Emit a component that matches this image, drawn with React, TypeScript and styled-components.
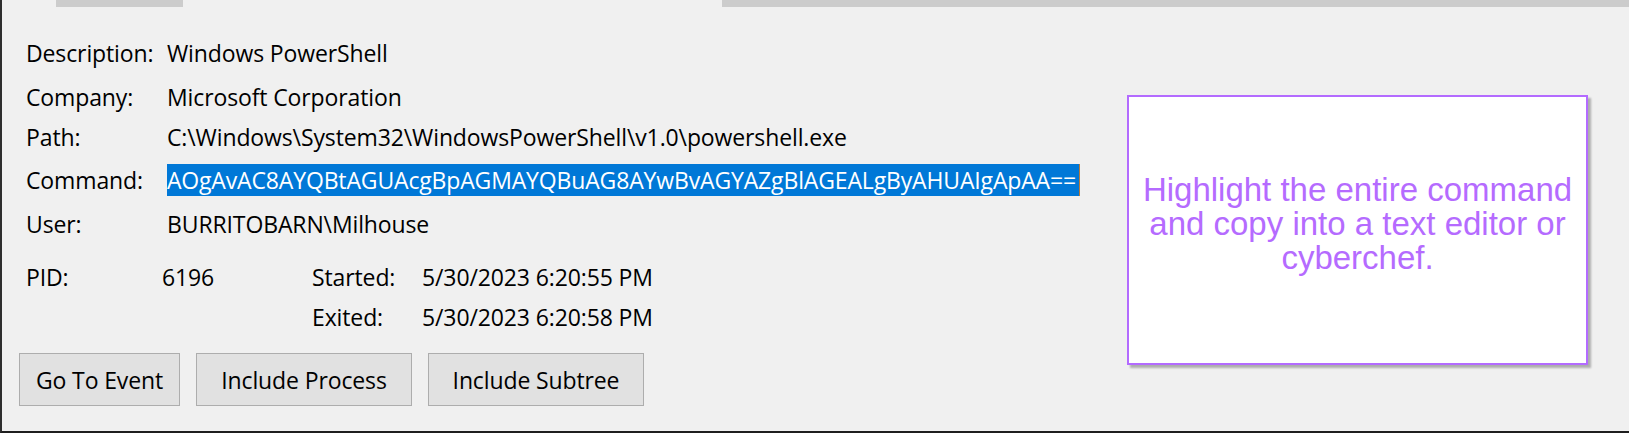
import React from 'react';
import styled, { createGlobalStyle } from 'styled-components';

const GlobalStyle = createGlobalStyle`
  html, body {
    margin: 0;
    padding: 0;
    background: #f0f0f0;
  }
  * {
    box-sizing: border-box;
  }
`;

const Window = styled.div`
  width: 1629px;
  height: 433px;
  background: #f0f0f0;
  border-left: 2px solid #2e2e2e;
  border-bottom: 2px solid #1e1e1e;
  font-family: 'Open Sans', 'Noto Sans', sans-serif;
  font-size: 23px;
  letter-spacing: -0.12px;
  color: #000;
  display: flex;
  flex-direction: column;
  overflow: hidden;
`;

const TabStrip = styled.div`
  display: flex;
  height: 7px;
  padding-left: 54px;
`;

const Tab = styled.div<{ $active?: boolean; $width?: number }>`
  height: 100%;
  width: ${(p) => (p.$width ? `${p.$width}px` : 'auto')};
  flex: ${(p) => (p.$width ? 'none' : '1')};
  background: ${(p) => (p.$active ? 'transparent' : '#cccccc')};
`;

const Body = styled.div`
  display: flex;
  flex: 1;
`;

const Details = styled.div`
  display: flex;
  flex-direction: column;
  padding: 24px 0 0 24px;
`;

const Row = styled.div<{ $h: number }>`
  display: flex;
  align-items: center;
  height: ${(p) => p.$h}px;
  line-height: ${(p) => p.$h}px;
  white-space: nowrap;
`;

const Label = styled.div<{ $w?: number }>`
  width: ${(p) => p.$w ?? 141}px;
  flex: none;
`;

const Value = styled.div<{ $w?: number }>`
  width: ${(p) => (p.$w ? `${p.$w}px` : 'auto')};
  flex: none;
`;

const CommandField = styled.div`
  width: 913px;
  height: 32px;
  line-height: 32px;
  background: #0078d7;
  color: #ffffff;
  display: flex;
  justify-content: flex-end;
  overflow: hidden;
  border-right: 1px solid #b87a3a;
  padding-right: 3px;
  letter-spacing: -0.15px;
`;

const Times = styled.div`
  display: flex;
  flex-direction: column;
  margin-top: 13px;
`;

const ButtonBar = styled.div`
  display: flex;
  gap: 16px;
  margin: 16px 0 0 -7px;
`;

const Button = styled.button<{ $w: number }>`
  width: ${(p) => p.$w}px;
  height: 53px;
  background: #e1e1e1;
  border: 1px solid #adadad;
  border-radius: 0;
  font-family: inherit;
  font-size: 23px;
  letter-spacing: inherit;
  color: #000;
  padding: 0;
`;

const Callout = styled.div`
  width: 461px;
  height: 270px;
  margin: 88px 41px 0 auto;
  background: #ffffff;
  border: 2px solid #b36bff;
  box-shadow: 3px 3px 2px rgba(0, 0, 0, 0.28);
  display: flex;
  align-items: center;
  justify-content: center;
  padding: 0 6px 12px;
  text-align: center;
  font-family: 'Liberation Sans', Arial, sans-serif;
  font-size: 33px;
  line-height: 34px;
  letter-spacing: 0;
  color: #b56bff;
`;

const command =
  'AOgAvAC8AYQBtAGUAcgBpAGMAYQBuAG8AYwBvAGYAZgBlAGEALgByAHUAIgApAA==';

export default function App() {
  return (
    <>
      <GlobalStyle />
      <Window>
        <TabStrip>
          <Tab $width={127} />
          <Tab $active $width={539} />
          <Tab />
        </TabStrip>
        <Body>
          <Details>
            <Row $h={44}>
              <Label>Description:</Label>
              <Value>Windows PowerShell</Value>
            </Row>
            <Row $h={44}>
              <Label>Company:</Label>
              <Value>Microsoft Corporation</Value>
            </Row>
            <Row $h={36}>
              <Label>Path:</Label>
              <Value>C:\Windows\System32\WindowsPowerShell\v1.0\powershell.exe</Value>
            </Row>
            <Row $h={50}>
              <Label>Command:</Label>
              <CommandField>{command}</CommandField>
            </Row>
            <Row $h={39}>
              <Label>User:</Label>
              <Value>BURRITOBARN\Milhouse</Value>
            </Row>
            <Times>
              <Row $h={40}>
                <Label $w={136}>PID:</Label>
                <Value $w={150}>6196</Value>
                <Label $w={110}>Started:</Label>
                <Value>5/30/2023 6:20:55 PM</Value>
              </Row>
              <Row $h={40}>
                <Label $w={286} />
                <Label $w={110}>Exited:</Label>
                <Value>5/30/2023 6:20:58 PM</Value>
              </Row>
            </Times>
            <ButtonBar>
              <Button $w={161}>Go To Event</Button>
              <Button $w={216}>Include Process</Button>
              <Button $w={216}>Include Subtree</Button>
            </ButtonBar>
          </Details>
          <Callout>Highlight the entire command and copy into a text editor or cyberchef.</Callout>
        </Body>
      </Window>
    </>
  );
}
